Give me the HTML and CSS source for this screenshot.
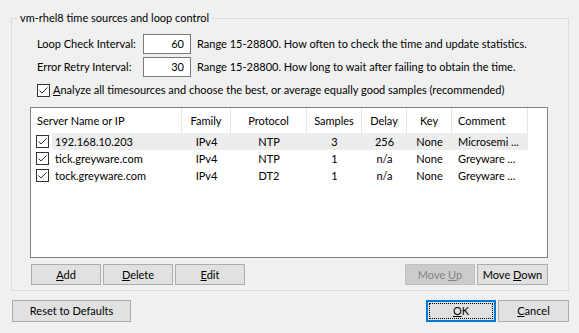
FILE: index.html
```html
<!DOCTYPE html>
<html>
<head>
<meta charset="utf-8">
<link rel="stylesheet" href="styles.css">
</head>
<body>
<div class="dialog">
  <fieldset class="group">
    <legend class="group-title">vm-rhel8 time sources and loop control</legend>
    <div class="group-body">
      <div class="field-row">
        <label class="field-label">Loop Check Interval:</label>
        <div class="num-input">60</div>
        <span class="field-hint">Range 15-28800. How often to check the time and update statistics.</span>
      </div>
      <div class="field-row field-row-2">
        <label class="field-label">Error Retry Interval:</label>
        <div class="num-input">30</div>
        <span class="field-hint">Range 15-28800. How long to wait after failing to obtain the time.</span>
      </div>
      <div class="check-row">
        <span class="checkbox"><svg width="13" height="13" viewBox="0 0 13 13"><rect x="0.5" y="0.5" width="12" height="12" fill="#fff" stroke="#333"/><path d="M2.5 6.5 L5 9 L10.5 3.5" fill="none" stroke="#333" stroke-width="1"/></svg></span>
        <span class="check-label"><u>A</u>nalyze all timesources and choose the best, or average equally good samples (recommended)</span>
      </div>

      <div class="list">
        <div class="list-head">
          <div class="hcell c-name">Server Name or IP</div>
          <div class="hcell c-center">Family</div>
          <div class="hcell c-center">Protocol</div>
          <div class="hcell c-center">Samples</div>
          <div class="hcell c-center">Delay</div>
          <div class="hcell c-center">Key</div>
          <div class="hcell c-left">Comment</div>
        </div>
        <div class="list-row selected">
          <div class="cell c-check"><svg width="13" height="13" viewBox="0 0 13 13"><rect x="0.5" y="0.5" width="12" height="12" fill="#fff" stroke="#333"/><path d="M2.5 6.5 L5 9 L10.5 3.5" fill="none" stroke="#333" stroke-width="1"/></svg></div>
          <div class="cell c-text">192.168.10.203</div>
          <div class="cell c-center">IPv4</div>
          <div class="cell c-center">NTP</div>
          <div class="cell c-center">3</div>
          <div class="cell c-center">256</div>
          <div class="cell c-center">None</div>
          <div class="cell c-left">Microsemi ...</div>
        </div>
        <div class="list-row">
          <div class="cell c-check"><svg width="13" height="13" viewBox="0 0 13 13"><rect x="0.5" y="0.5" width="12" height="12" fill="#fff" stroke="#333"/><path d="M2.5 6.5 L5 9 L10.5 3.5" fill="none" stroke="#333" stroke-width="1"/></svg></div>
          <div class="cell c-text">tick.greyware.com</div>
          <div class="cell c-center">IPv4</div>
          <div class="cell c-center">NTP</div>
          <div class="cell c-center">1</div>
          <div class="cell c-center">n/a</div>
          <div class="cell c-center">None</div>
          <div class="cell c-left">Greyware ...</div>
        </div>
        <div class="list-row">
          <div class="cell c-check"><svg width="13" height="13" viewBox="0 0 13 13"><rect x="0.5" y="0.5" width="12" height="12" fill="#fff" stroke="#333"/><path d="M2.5 6.5 L5 9 L10.5 3.5" fill="none" stroke="#333" stroke-width="1"/></svg></div>
          <div class="cell c-text">tock.greyware.com</div>
          <div class="cell c-center">IPv4</div>
          <div class="cell c-center">DT2</div>
          <div class="cell c-center">1</div>
          <div class="cell c-center">n/a</div>
          <div class="cell c-center">None</div>
          <div class="cell c-left">Greyware ...</div>
        </div>
      </div>

      <div class="list-buttons">
        <button class="btn"><u>A</u>dd</button>
        <button class="btn"><u>D</u>elete</button>
        <button class="btn"><u>E</u>dit</button>
        <div class="spacer"></div>
        <button class="btn disabled">Move <u>U</u>p</button>
        <button class="btn btn-wide">Move <u>D</u>own</button>
      </div>
    </div>
  </fieldset>

  <div class="footer">
    <button class="btn btn-reset">Reset to Defaults</button>
    <div class="spacer"></div>
    <button class="btn btn-footer btn-default"><span class="focus-rect"><u>O</u>K</span></button>
    <button class="btn btn-footer btn-wide"><u>C</u>ancel</button>
  </div>
</div>
</body>
</html>
```

FILE: styles.css
```css
* { box-sizing: border-box; }

html, body {
  margin: 0;
  padding: 0;
  background: #f0f0f0;
}

body {
  width: 579px;
  height: 333px;
  overflow: hidden;
  font-family: "Lato", "Noto Sans", sans-serif;
  font-size: 11px;
  line-height: 16px;
  color: #000;
}

.dialog {
  padding: 10px 10px 0 11px;
}

.group {
  margin: 0;
  border: 1px solid #dcdcdc;
  padding: 8px 0 5px 6px;
  min-inline-size: 0;
}

.group-title {
  padding: 0 2px;
  line-height: 16px;
}

.group-body {
  margin-left: 12px;
  width: 518px;
}

.field-row {
  display: flex;
  align-items: center;
  height: 20px;
  padding-left: 7px;
}

.field-row-2 {
  margin-top: 3px;
}

.field-label {
  flex: 0 0 106px;
  white-space: nowrap;
}

.num-input {
  flex: 0 0 48px;
  height: 20px;
  border: 1px solid #7a7a7a;
  background: #fff;
  text-align: right;
  padding-right: 6px;
  line-height: 18px;
}

.field-hint {
  margin-left: 6px;
  white-space: nowrap;
}

.check-row {
  display: flex;
  align-items: center;
  height: 16px;
  margin-top: 5px;
  padding-left: 7px;
}

.checkbox {
  display: flex;
  flex: 0 0 13px;
  height: 13px;
}

.check-label {
  margin-left: 3px;
  white-space: nowrap;
}

.list {
  margin-top: 9px;
  width: 518px;
  height: 151px;
  border: 1px solid #828282;
  background: #fff;
}

.list-head,
.list-row {
  display: grid;
  grid-template-columns: 21px 130px 49px 76px 55px 45px 45px 76px;
}

.list-head {
  height: 25px;
}

.hcell {
  border-right: 1px solid #e5e5e5;
  line-height: 25px;
  white-space: nowrap;
  overflow: hidden;
}

.hcell.c-name {
  grid-column: span 2;
  padding-left: 6px;
}

.list-row {
  height: 17px;
}

.cell {
  line-height: 17px;
  white-space: nowrap;
  overflow: hidden;
}

.c-center { text-align: center; }
.c-left { padding-left: 6px; text-align: left; }

.c-check {
  display: flex;
  align-items: center;
  padding-left: 5px;
}

.c-text {
  padding-left: 3px;
}

.list-row.selected .cell:not(.c-check) {
  background: #ededed;
}

.list-buttons {
  display: flex;
  gap: 2px;
  margin-top: 6px;
  padding-left: 1px;
}

.spacer { flex: 1; }

.btn {
  flex: 0 0 70px;
  height: 21px;
  margin: 0;
  padding: 0;
  border: 1px solid #adadad;
  background: #e1e1e1;
  font-family: inherit;
  font-size: 11px;
  line-height: 16px;
  color: #000;
}

.btn-wide { flex-basis: 71px; }

.btn.disabled {
  background: #cccccc;
  border-color: #bfbfbf;
  color: #838383;
}

.footer {
  display: flex;
  gap: 2px;
  margin-top: 9px;
  padding-left: 1px;
}

.btn-reset {
  flex-basis: 119px;
  height: 22px;
}

.btn-footer {
  height: 22px;
}

.btn-default {
  border: 2px solid #0078d7;
  padding: 1px;
}

.focus-rect {
  display: flex;
  align-items: center;
  justify-content: center;
  width: 100%;
  height: 100%;
  border: 1px dotted #000;
}
```
